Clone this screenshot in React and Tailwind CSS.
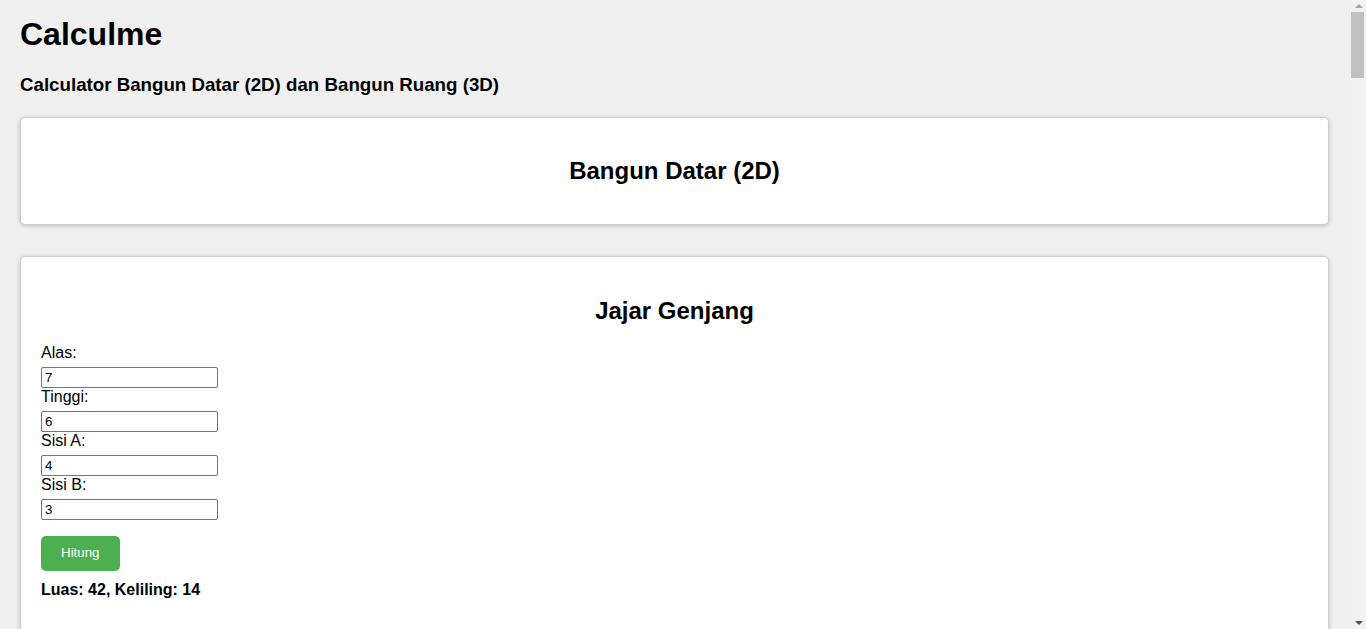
import { useEffect, useRef, useState } from 'react';

const fmt = (n) => (Number.isFinite(n) ? Math.round(n * 100) / 100 : 0);

const shapes2D = [
  {
    name: 'Jajar Genjang',
    fields: [['Alas', 7], ['Tinggi', 6], ['Sisi A', 4], ['Sisi B', 3]],
    calc: ([a, t, s1, s2]) => `Luas: ${fmt(a * t)}, Keliling: ${fmt(2 * (s1 + s2))}`,
  },
  {
    name: 'Persegi',
    fields: [['Sisi', 5]],
    calc: ([s]) => `Luas: ${fmt(s * s)}, Keliling: ${fmt(4 * s)}`,
  },
  {
    name: 'Persegi Panjang',
    fields: [['Panjang', 8], ['Lebar', 4]],
    calc: ([p, l]) => `Luas: ${fmt(p * l)}, Keliling: ${fmt(2 * (p + l))}`,
  },
  {
    name: 'Segitiga',
    fields: [['Alas', 6], ['Tinggi', 4], ['Sisi A', 5], ['Sisi B', 5], ['Sisi C', 6]],
    calc: ([a, t, x, y, z]) => `Luas: ${fmt(0.5 * a * t)}, Keliling: ${fmt(x + y + z)}`,
  },
  {
    name: 'Lingkaran',
    fields: [['Jari-jari', 7]],
    calc: ([r]) => `Luas: ${fmt(Math.PI * r * r)}, Keliling: ${fmt(2 * Math.PI * r)}`,
  },
  {
    name: 'Trapesium',
    fields: [['Sisi Atas', 4], ['Sisi Bawah', 10], ['Tinggi', 4], ['Sisi Miring', 5]],
    calc: ([a, b, t, m]) => `Luas: ${fmt(((a + b) / 2) * t)}, Keliling: ${fmt(a + b + 2 * m)}`,
  },
  {
    name: 'Belah Ketupat',
    fields: [['Diagonal 1', 6], ['Diagonal 2', 8], ['Sisi', 5]],
    calc: ([d1, d2, s]) => `Luas: ${fmt((d1 * d2) / 2)}, Keliling: ${fmt(4 * s)}`,
  },
  {
    name: 'Layang-Layang',
    fields: [['Diagonal 1', 6], ['Diagonal 2', 10], ['Sisi A', 5], ['Sisi B', 7]],
    calc: ([d1, d2, a, b]) => `Luas: ${fmt((d1 * d2) / 2)}, Keliling: ${fmt(2 * (a + b))}`,
  },
];

const shapes3D = [
  {
    name: 'Kubus',
    fields: [['Sisi', 4]],
    calc: ([s]) => `Volume: ${fmt(s ** 3)}, Luas Permukaan: ${fmt(6 * s * s)}`,
  },
  {
    name: 'Balok',
    fields: [['Panjang', 6], ['Lebar', 4], ['Tinggi', 3]],
    calc: ([p, l, t]) => `Volume: ${fmt(p * l * t)}, Luas Permukaan: ${fmt(2 * (p * l + p * t + l * t))}`,
  },
  {
    name: 'Tabung',
    fields: [['Jari-jari', 7], ['Tinggi', 10]],
    calc: ([r, t]) => `Volume: ${fmt(Math.PI * r * r * t)}, Luas Permukaan: ${fmt(2 * Math.PI * r * (r + t))}`,
  },
  {
    name: 'Kerucut',
    fields: [['Jari-jari', 3], ['Tinggi', 4], ['Garis Pelukis', 5]],
    calc: ([r, t, s]) => `Volume: ${fmt((Math.PI * r * r * t) / 3)}, Luas Permukaan: ${fmt(Math.PI * r * (r + s))}`,
  },
  {
    name: 'Bola',
    fields: [['Jari-jari', 7]],
    calc: ([r]) => `Volume: ${fmt((4 / 3) * Math.PI * r ** 3)}, Luas Permukaan: ${fmt(4 * Math.PI * r * r)}`,
  },
  {
    name: 'Limas Segiempat',
    fields: [['Sisi Alas', 6], ['Tinggi', 4], ['Tinggi Sisi Tegak', 5]],
    calc: ([s, t, ts]) => `Volume: ${fmt((s * s * t) / 3)}, Luas Permukaan: ${fmt(s * s + 2 * s * ts)}`,
  },
  {
    name: 'Prisma Segitiga',
    fields: [['Alas Segitiga', 6], ['Tinggi Segitiga', 4], ['Tinggi Prisma', 10], ['Sisi Miring', 5]],
    calc: ([a, t, tp, m]) => `Volume: ${fmt(0.5 * a * t * tp)}, Luas Permukaan: ${fmt(a * t + (a + 2 * m) * tp)}`,
  },
];

const cardClass =
  'rounded-[5px] border border-[#cfcfcf] bg-white p-5 shadow-[0_1px_4px_rgba(0,0,0,0.22)]';

const TitleCard = ({ title, className = '' }) => (
  <section className={`${cardClass} ${className}`}>
    <h2 className="my-[19.5px] text-center text-2xl font-bold leading-[27.6px]">{title}</h2>
  </section>
);

const ShapeCard = ({ shape }) => {
  const [values, setValues] = useState(shape.fields.map(([, v]) => String(v)));
  const [result, setResult] = useState(shape.calc(shape.fields.map(([, v]) => v)));

  const hitung = () => setResult(shape.calc(values.map((v) => parseFloat(v) || 0)));

  return (
    <section className={`${cardClass} mt-[31px]`}>
      <h2 className="mt-5 mb-[19px] text-center text-2xl font-bold leading-[27.6px]">{shape.name}</h2>
      {shape.fields.map(([label], i) => (
        <div key={label}>
          <label className="block text-base leading-[18px]">{label}:</label>
          <input
            type="number"
            value={values[i]}
            onChange={(e) => setValues(values.map((v, j) => (j === i ? e.target.value : v)))}
            className="mt-[5px] block h-[21px] w-[177px] rounded-[2px] border border-[#767676] bg-white px-[3px] py-[1px] text-[13.33px] leading-[15px] [appearance:textfield] [&::-webkit-inner-spin-button]:appearance-none"
          />
        </div>
      ))}
      <button
        onClick={hitung}
        className="mt-4 h-[35px] rounded-[5px] bg-[#4caf50] px-5 text-[13.33px] text-white"
      >
        Hitung
      </button>
      <p className="mt-[10px] mb-4 text-base font-bold leading-[18.4px]">{result}</p>
    </section>
  );
};

// classic scrollbar look, driven by the scroll position of <main>
const Scrollbar = ({ scroll }) => {
  const trackH = 629 - 24;
  const thumbH = Math.max(20, Math.round(trackH * scroll.ratio));
  const top = Math.round((trackH - thumbH) * scroll.pos);
  return (
    <aside className="flex w-[15px] shrink-0 flex-col bg-[#f1f1f1]">
      <div className="flex h-[12px] items-center justify-center">
        <div className="h-0 w-0 border-x-[4px] border-b-[4px] border-x-transparent border-b-[#a3a3a3]" />
      </div>
      <div className="relative flex-1">
        <div className="absolute left-0 right-[2px] bg-[#c1c1c1]" style={{ top, height: thumbH }} />
      </div>
      <div className="flex h-[12px] items-center justify-center">
        <div className="h-0 w-0 border-x-[4px] border-t-[4px] border-x-transparent border-t-[#505050]" />
      </div>
    </aside>
  );
};

export default function App() {
  const mainRef = useRef(null);
  const [scroll, setScroll] = useState({ ratio: 0.114, pos: 0 });

  const update = () => {
    const el = mainRef.current;
    if (!el) return;
    const max = el.scrollHeight - el.clientHeight;
    setScroll({ ratio: el.clientHeight / el.scrollHeight, pos: max > 0 ? el.scrollTop / max : 0 });
  };

  useEffect(update, []);

  return (
    <div className="flex h-screen bg-[#f0f0f0] font-['Liberation_Sans',Arial,sans-serif] text-black">
      <main
        ref={mainRef}
        onScroll={update}
        className="flex-1 overflow-y-scroll pr-[22px] pb-[60px] pl-5 [scrollbar-width:none] [&::-webkit-scrollbar]:hidden"
      >
        <h1 className="pt-4 text-[32px] font-bold leading-[37px]">Calculme</h1>
        <h3 className="mt-[21px] text-[18.72px] font-bold leading-[21.5px]">
          Calculator Bangun Datar (2D) dan Bangun Ruang (3D)
        </h3>

        <TitleCard title="Bangun Datar (2D)" className="mt-[21px]" />
        {shapes2D.map((s) => (
          <ShapeCard key={s.name} shape={s} />
        ))}

        <TitleCard title="Bangun Ruang (3D)" className="mt-[31px]" />
        {shapes3D.map((s) => (
          <ShapeCard key={s.name} shape={s} />
        ))}
      </main>
      <Scrollbar scroll={scroll} />
    </div>
  );
}
